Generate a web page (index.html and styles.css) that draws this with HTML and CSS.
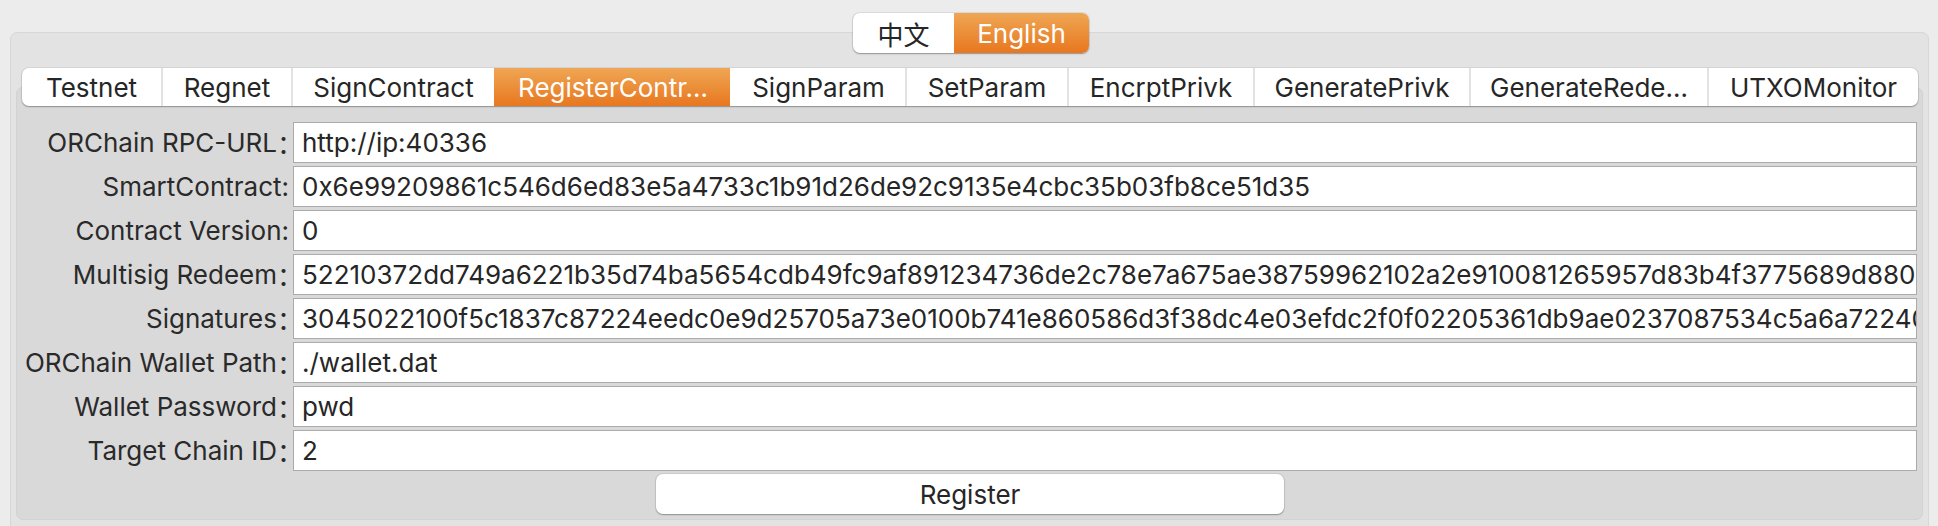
FILE: index.html
```html
<!DOCTYPE html>
<html lang="en">
<head>
<meta charset="utf-8">
<title>ORChain Tool</title>
<link rel="stylesheet" href="styles.css">
</head>
<body>
<div class="lang">
  <div class="seg">
    <div class="seg-item zh">中文</div>
    <div class="seg-item en active">English</div>
  </div>
</div>
<div class="frame">
  <div class="tabs">
    <div class="tab t1">Testnet</div>
    <div class="tab t2">Regnet</div>
    <div class="tab t3">SignContract</div>
    <div class="tab t4 active">RegisterContr…</div>
    <div class="tab t5">SignParam</div>
    <div class="tab t6">SetParam</div>
    <div class="tab t7">EncrptPrivk</div>
    <div class="tab t8">GeneratePrivk</div>
    <div class="tab t9">GenerateRede…</div>
    <div class="tab t10">UTXOMonitor</div>
  </div>
  <div class="panel">
    <div class="form">
      <div class="lbl">ORChain RPC-URL<span class="fw">：</span></div>
      <div class="field">http://ip:40336</div>
      <div class="lbl">SmartContract:</div>
      <div class="field">0x6e99209861c546d6ed83e5a4733c1b91d26de92c9135e4cbc35b03fb8ce51d35</div>
      <div class="lbl">Contract Version:</div>
      <div class="field">0</div>
      <div class="lbl">Multisig Redeem<span class="fw">：</span></div>
      <div class="field">52210372dd749a6221b35d74ba5654cdb49fc9af891234736de2c78e7a675ae38759962102a2e910081265957d83b4f3775689d88053ae</div>
      <div class="lbl">Signatures<span class="fw">：</span></div>
      <div class="field">3045022100f5c1837c87224eedc0e9d25705a73e0100b741e860586d3f38dc4e03efdc2f0f02205361db9ae0237087534c5a6a722400c1</div>
      <div class="lbl">ORChain Wallet Path<span class="fw">：</span></div>
      <div class="field">./wallet.dat</div>
      <div class="lbl">Wallet Password<span class="fw">：</span></div>
      <div class="field">pwd</div>
      <div class="lbl">Target Chain ID<span class="fw">：</span></div>
      <div class="field">2</div>
    </div>
    <div class="actions">
      <div class="btn">Register</div>
    </div>
  </div>
</div>
</body>
</html>
```

FILE: styles.css
```css
* { box-sizing: border-box; }
html, body { margin: 0; height: 526px; overflow: hidden; }
body {
  background: #ececec;
  font-family: Inter, "Liberation Sans", "Noto Sans CJK SC", sans-serif;
  font-size: 26px;
  color: #262626;
}
.lang {
  display: flex;
  justify-content: center;
  padding-top: 13px;
  padding-left: 4px;
  position: relative;
  z-index: 2;
}
.seg {
  display: flex;
  height: 40px;
  border-radius: 7px;
  background: #fff;
  overflow: hidden;
  box-shadow: 0 0 0 1px rgba(0,0,0,0.07), 0 1px 1.5px rgba(0,0,0,0.3);
}
.seg-item {
  display: flex;
  align-items: center;
  justify-content: center;
}
.seg-item.zh { width: 101px; font-family: "Noto Sans CJK SC", sans-serif; }
.seg-item.en { width: 135px; }
.active {
  background: linear-gradient(#efa654, #e8771f);
  color: #fff;
}
.frame {
  margin: -21px 9px 0 10px;
  height: 500px;
  background: #e3e3e3;
  border: 1px solid #d7d7d7;
  border-radius: 7px;
  padding-top: 35px;
}
.tabs {
  position: relative;
  z-index: 1;
  display: flex;
  height: 38px;
  margin: 0 10px 0 11px;
  background: #fff;
  border-radius: 7px;
  overflow: hidden;
  box-shadow: 0 0 0 1px rgba(0,0,0,0.06), 0 1px 1.5px rgba(0,0,0,0.3);
}
.tab {
  display: flex;
  align-items: center;
  justify-content: center;
  white-space: nowrap;
  border-left: 2px solid #e2e2e2;
}
.tab.t1 { border-left: 0; }
.tab.active, .tab.active + .tab { border-left-color: transparent; }
.t1 { width: 139px; }
.t2 { width: 130px; }
.t3 { width: 203px; }
.t4 { width: 236px; }
.t5 { width: 175px; }
.t6 { width: 162px; }
.t7 { width: 186px; }
.t8 { width: 216px; }
.t9 { width: 238px; }
.t10 { width: 211px; }
.panel {
  margin: -19px 5px 0 5px;
  background: #d9d9d9;
  border: 1px solid #d2d2d2;
  border-radius: 7px;
  padding: 34px 5px 5px 6px;
}
.form {
  display: grid;
  grid-template-columns: 266px 1fr;
  column-gap: 4px;
  row-gap: 3px;
}
.lbl {
  height: 41px;
  display: flex;
  align-items: center;
  justify-content: flex-end;
  white-space: nowrap;
  color: #2a2a2a;
}
.fw {
  font-family: "Noto Sans CJK SC", sans-serif;
  margin-right: -14px;
}
.field {
  height: 41px;
  background: #fff;
  border: 1px solid #ababab;
  padding: 0 8px;
  display: flex;
  align-items: center;
  white-space: nowrap;
  overflow: hidden;
}
.actions {
  display: flex;
  justify-content: center;
  margin-top: 3px;
}
.btn {
  width: 628px;
  height: 40px;
  background: #fff;
  border-radius: 7px;
  display: flex;
  align-items: center;
  justify-content: center;
  box-shadow: 0 0 0 1px rgba(0,0,0,0.06), 0 1px 1.5px rgba(0,0,0,0.3);
}
```
